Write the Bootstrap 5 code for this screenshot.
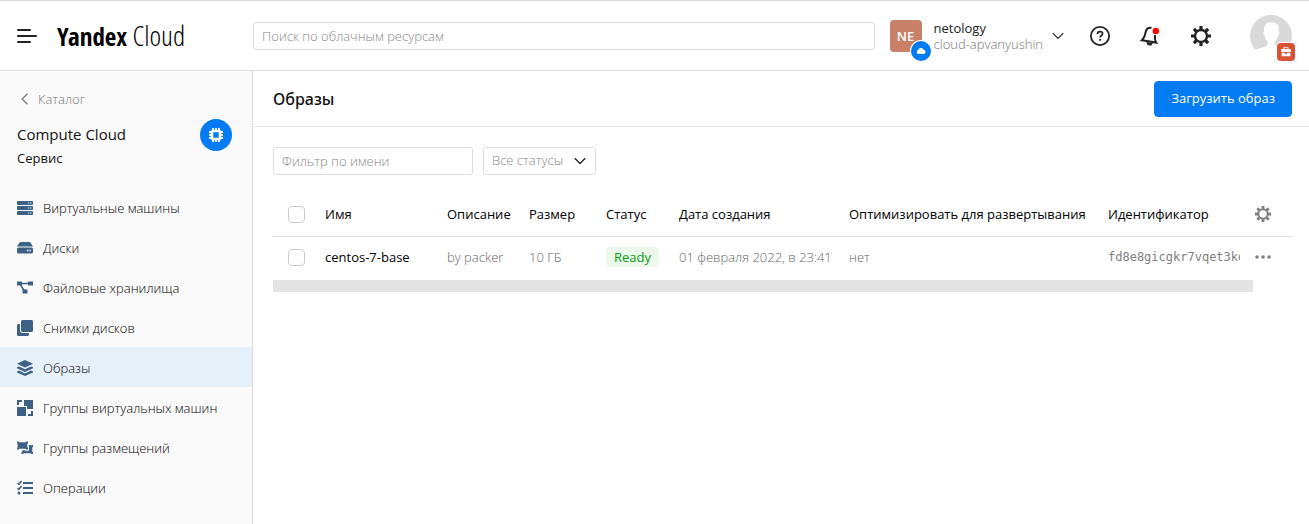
<!DOCTYPE html>
<html lang="ru">
<head>
<meta charset="utf-8">
<meta name="viewport" content="width=device-width, initial-scale=1">
<title>Образы — Compute Cloud</title>
<link rel="stylesheet" href="https://cdn.jsdelivr.net/npm/bootstrap@5.3.0/dist/css/bootstrap.min.css">
<style>
  body { font-family: "Open Sans", "Noto Sans", sans-serif; font-size: 13px; line-height: 16px; color: #111; }
  a { color: inherit; }
  svg { display: block; flex: none; }
  .muted { color: #777; font-weight: 300; }
  .topbar { border-top: 1px solid #d9d9d9; border-bottom: 1px solid #e0e0e0; height: 71px; padding-right: 17px; }
  .brand-area { width: 253px; padding-left: 17px; gap: 20px; }
  .logo { font: 300 28px/32px "Open Sans Condensed Light", "Open Sans Condensed", "Liberation Sans Narrow", sans-serif; color: #000; }
  .logo b { font-family: "Open Sans Condensed", "Liberation Sans Narrow", sans-serif; font-size: 25px; font-weight: 700; }
  .field { height: 28px; min-height: 28px; border: 1px solid #dedede; border-radius: 3px; padding: 0 8px; font-size: 13px; line-height: 16px; font-weight: 300; }
  .field::placeholder { color: #888; opacity: 1; }
  .filter-name { width: 200px; }
  .filter-status { width: 113px; color: #888; padding-bottom: 2px;
    background: #fff url("data:image/svg+xml,%3csvg xmlns='http://www.w3.org/2000/svg' viewBox='0 0 12 8'%3e%3cpath fill='none' stroke='%23222' stroke-width='1.4' d='M.8 1.2 6 6.4l5.2-5.2'/%3e%3c/svg%3e") no-repeat right 9px center / 12px 8px; }
  .icon-btn { border: 0; background: none; padding: 0; color: #222; }
  .account { margin-left: 15px; }
  .org { width: 32px; height: 32px; border-radius: 4px; background: #c98069; color: #fff; font-weight: 600; margin-right: 12px; }
  .org-mark { left: 20px; top: 20px; }
  .account-name { margin-right: 9px; }
  .actions { gap: 30px; margin-left: 26px; }
  .user { margin-left: 8px; }
  .user-mark { right: -4px; bottom: -5px; }
  .sidebar { width: 253px; background: #fafafa; border-right: 1px solid #dedede; }
  .side-head { padding: 20px 20px 0 17px; height: 116px; }
  .service-text { padding-top: 5px; }
  .service { font-size: 15px; line-height: 20px; margin-bottom: 6px; }
  .side-link { height: 40px; padding: 2px 0 0 17px; gap: 10px; text-decoration: none; font-weight: 300; color: #000; }
  .side-link svg { color: #3d6185; }
  .side-link.active { background: #e5f0f9; }
  .page-head { height: 56px; padding: 0 17px 0 20px; border-bottom: 1px solid #e5e5e5; }
  .page-head h1 { font-family: "Noto Sans", sans-serif; font-size: 16px; line-height: 20px; font-weight: 500; }
  .upload { --bs-btn-bg: #027bf3; --bs-btn-border-color: #027bf3; --bs-btn-padding-x: 16px; --bs-btn-border-radius: 4px; --bs-btn-font-size: 13px; height: 36px; }
  .page-body { padding: 20px 17px 0 20px; }
  .filters { gap: 10px; }
  .images { table-layout: fixed; margin: 18px 0 2px; width: 100%; min-width: 980px; }
  .images th { font-weight: 400; color: #000; height: 43px; }
  .images thead { border-bottom: 1px solid #dedede; }
  .images td { height: 42px; color: #666; font-weight: 300; }
  .images th, .images td { padding: 0; vertical-align: middle; white-space: nowrap; overflow: hidden; }
  .images .tick, .images .tools { padding-left: 15px; }
  .images .ident { font-family: "DejaVu Sans Mono", monospace; font-size: 12px; color: #808080; }
  .form-check-input { width: 17px; height: 17px; border: 1px solid #ccc; margin: 0; display: block; }
  .form-check-input[type=checkbox] { border-radius: 4px; }
  .c-tick { width: 52px } .c-name { width: 122px } .c-desc { width: 82px } .c-size { width: 77px }
  .c-status { width: 73px } .c-date { width: 170px } .c-opt { width: 259px } .c-tools { width: 52px }
  .ready { background: #ebf9ea; color: #0a9a13; font-weight: 400; border-radius: 4px; line-height: 20px; padding: 0 8px; }
  .scroll-track { height: 12px; background: #e4e4e4; margin-right: 39px; }
</style>
<script src="https://cdn.jsdelivr.net/npm/bootstrap@5.3.0/dist/js/bootstrap.bundle.min.js"></script>
</head>
<body class="d-flex flex-column min-vh-100">

<header class="topbar d-flex align-items-center">
  <div class="brand-area d-flex align-items-center flex-shrink-0">
    <button class="icon-btn" type="button" aria-label="Меню">
      <svg width="20" height="16" viewBox="0 0 20 16" fill="none" stroke="currentColor" stroke-width="2" stroke-linecap="round"><path d="M1 2h12M1 8h18M1 14h12"/></svg>
    </button>
    <a class="logo text-decoration-none text-nowrap" href="#"><b>Yandex</b> Cloud</a>
  </div>
  <input class="form-control field flex-grow-1 w-auto" type="search" placeholder="Поиск по облачным ресурсам" aria-label="Поиск по облачным ресурсам">
  <button class="icon-btn account d-flex align-items-center text-start flex-shrink-0" type="button">
    <span class="org position-relative d-flex align-items-center justify-content-center">NE
      <svg class="org-mark position-absolute" width="22" height="22" viewBox="0 0 22 22"><circle cx="11" cy="11" r="11" fill="#fff"/><circle cx="11" cy="11" r="10" fill="#027bf3"/><path fill="#fff" d="M8.500 14a2 2 0 0 1-.4-3.900 3 3 0 0 1 5.600-.4 2.200 2.200 0 0 1 .2 4.300z"/></svg>
    </span>
    <span class="account-name">netology<br><span class="muted">cloud-apvanyushin</span></span>
    <svg width="12" height="8" viewBox="0 0 12 8" fill="none" stroke="currentColor" stroke-width="1.200"><path d="M.8 1.200 6 6.400l5.200-5.200"/></svg>
  </button>
  <div class="actions d-flex align-items-center flex-shrink-0">
    <button class="icon-btn" type="button" aria-label="Справка">
      <svg width="20" height="20" viewBox="0 0 20 20" fill="none" stroke="currentColor" stroke-width="1.800"><circle cx="10" cy="10" r="9.100"/><path d="M7.400 8.100C7.400 6.500 8.500 5.600 10 5.600s2.600.9 2.600 2.200c0 1.700-2.500 1.800-2.500 3.700" stroke-width="1.700"/><circle cx="10.100" cy="13.800" r="1.100" fill="currentColor" stroke="none"/></svg>
    </button>
    <button class="icon-btn" type="button" aria-label="Уведомления">
      <svg width="20" height="20" viewBox="0 0 20 20"><path d="M11.500 1.800C8.300 1.500 6.200 3 5.700 6c-.5 3.400-1 5.500-3.700 8.200l14.200 2.400c-1.500-2.500-1.500-4.800-1.200-7.400" fill="none" stroke="currentColor" stroke-width="2"/><path fill="currentColor" d="m6.500 16 6.300 1c-.5 1.900-1.800 2.800-3.500 2.500-1.700-.2-2.800-1.600-2.800-3.500z"/><circle cx="15.800" cy="5" r="3.200" fill="red"/></svg>
    </button>
    <button class="icon-btn" type="button" aria-label="Настройки">
      <svg width="22" height="22" viewBox="-11 -11 22 22" fill="none" stroke="currentColor"><circle r="6" stroke-width="2.400"/><path stroke-width="3.200" d="M0-10v3.600M0 6.400V10M-10 0h3.600M6.400 0H10M-7.100-7.100l2.600 2.600M4.500 4.500l2.600 2.600M7.100-7.100 4.500-4.500M-4.500 4.500l-2.600 2.600"/></svg>
    </button>
    <button class="icon-btn user position-relative" type="button" aria-label="Профиль">
      <svg width="42" height="42" viewBox="0 0 42 42"><path fill="#d9d9d9" fill-rule="evenodd" d="M5 34.500A21 21 0 1 1 37 34.500C35 32.500 29 32 25 30v-3.500c1.800-1.500 2.700-3.500 3-6 1.500-.6 1.700-3.600.6-4.300C29.500 11 28 8.500 25 8.200 20 6 13 8 14 16.200c-1.200.7-.9 3.700.5 4.300.3 2.500 1.300 4.500 3 6V30C15 32.500 10 33 5 34.500z"/></svg>
      <svg class="user-mark position-absolute" width="20" height="20" viewBox="0 0 20 20"><rect width="20" height="20" rx="5" fill="#fff"/><rect x="1" y="1" width="18" height="18" rx="4" fill="#d95233"/><path fill="#fff" fill-rule="evenodd" d="M7.500 7V5.300h5V7h2.300v3H5.200V7zm1-1v1h3V6zM5.600 10.800h3.200v1h2.400v-1h3.200v3.400H5.600z"/></svg>
    </button>
  </div>
</header>

<div class="d-flex flex-grow-1">
  <aside class="sidebar flex-shrink-0">
    <div class="side-head">
      <a class="d-flex align-items-center text-decoration-none muted ms-1 mb-2" href="#">
        <svg class="me-2" width="9" height="12" viewBox="0 0 9 12" fill="none" stroke="#777" stroke-width="1.200"><path d="M6.500.8 1 6l5.500 5.200"/></svg>Каталог
      </a>
      <div class="d-flex align-items-start justify-content-between pt-1">
        <div class="service-text"><div class="service">Compute Cloud</div><div>Сервис</div></div>
        <svg width="32" height="32" viewBox="-16 -16 32 32"><circle r="16" fill="#027bf3"/><path stroke="#fff" stroke-width="1.800" d="M-3-7V7M0-7V7M3-7V7M-7-3H7M-7 0H7M-7 3H7"/><rect x="-4" y="-4" width="8" height="8" rx="1" fill="#027bf3" stroke="#fff" stroke-width="2.600"/></svg>
      </div>
    </div>
    <nav class="d-flex flex-column">
      <a class="side-link d-flex align-items-center" href="#"><svg width="16" height="16" viewBox="0 0 16 16"><path fill="currentColor" d="M1 1h14a1 1 0 0 1 1 1v2a1 1 0 0 1-1 1H1a1 1 0 0 1-1-1V2a1 1 0 0 1 1-1zm0 5h14a1 1 0 0 1 1 1v2a1 1 0 0 1-1 1H1a1 1 0 0 1-1-1V7a1 1 0 0 1 1-1zm0 5h14a1 1 0 0 1 1 1v2a1 1 0 0 1-1 1H1a1 1 0 0 1-1-1v-2a1 1 0 0 1 1-1z"/><path stroke="#fafafa" stroke-width="1.200" d="M11 3h1.200M13.300 3h1.200M11 8h1.200M13.300 8h1.200M11 13h1.200M13.300 13h1.200"/></svg>Виртуальные машины</a>
      <a class="side-link d-flex align-items-center" href="#"><svg width="16" height="16" viewBox="0 0 16 16"><path fill="currentColor" d="M4 2h8q1 0 1.600.8L16 6.500H0l2.400-3.700Q3 2 4 2zM1.500 7.500h13A1.500 1.500 0 0 1 16 9v3a1.500 1.500 0 0 1-1.500 1.500h-13A1.500 1.500 0 0 1 0 12V9a1.500 1.500 0 0 1 1.500-1.500z"/><path stroke="#fafafa" stroke-width="1.400" d="M10 10.500h1.400M12.500 10.500h1.400"/></svg>Диски</a>
      <a class="side-link d-flex align-items-center" href="#"><svg width="16" height="16" viewBox="0 0 16 16"><path fill="currentColor" d="M0 1.500h5v4H0zM11 1.500h5v4h-5zM5.500 9.500h5v4h-5z"/><path fill="none" stroke="currentColor" stroke-width="1.500" d="M4 3.500h8M3.500 5l4 6"/></svg>Файловые хранилища</a>
      <a class="side-link d-flex align-items-center" href="#"><svg width="16" height="16" viewBox="0 0 16 16"><path fill="currentColor" d="M5.500 0h9A1.500 1.500 0 0 1 16 1.500v9a1.500 1.500 0 0 1-1.500 1.500h-9A1.500 1.500 0 0 1 4 10.500v-9A1.500 1.500 0 0 1 5.500 0zM1.500 4H3v6.500A2.500 2.500 0 0 0 5.500 13H12v1.500a1.500 1.500 0 0 1-1.500 1.500h-9A1.500 1.500 0 0 1 0 14.500v-9A1.500 1.500 0 0 1 1.500 4z"/></svg>Снимки дисков</a>
      <a class="side-link active d-flex align-items-center" href="#" aria-current="page"><svg width="16" height="16" viewBox="0 0 16 16"><path fill="currentColor" d="m8 0 8 3.700-8 3.800-8-3.800zM0 7.300l2-.9L8 9.200l6-2.800 2 .9v1L8 12 0 8.300zM0 11.500l2-.9 6 2.800 6-2.800 2 .9v1L8 16l-8-3.500z"/></svg>Образы</a>
      <a class="side-link d-flex align-items-center" href="#"><svg width="16" height="16" viewBox="0 0 16 16"><path fill="currentColor" d="M7 0h9v9h-6V6H7zM0 7h9v9H0zM0 0h5v2H2v3H0zM16 11v5h-5v-2h3v-3z"/></svg>Группы виртуальных машин</a>
      <a class="side-link d-flex align-items-center" href="#"><svg width="16" height="16" viewBox="0 0 16 16"><path fill="currentColor" d="M0 1.500h2v.7h7v-.7h2v2h-.7v4h.7v2H9v-.7H2v.7H0v-2h.7v-4H0zM12 5h2v.7L15 5h1v2h-.7v5h.7v2h-2v-.7H6.500v.7h-2v-2h.7V10.200H8v.5h4z"/></svg>Группы размещений</a>
      <a class="side-link d-flex align-items-center" href="#"><svg width="16" height="16" viewBox="0 0 16 16"><path fill="none" stroke="currentColor" stroke-width="1.900" d="M6 3h10M6 8h10M6 13h10"/><path fill="none" stroke="currentColor" stroke-width="1.500" d="m.5 3 1.300 1.300L4.600 1M.5 8l1.300 1.300L4.600 6"/><circle cx="2" cy="13" r="1.500" fill="currentColor"/></svg>Операции</a>
    </nav>
  </aside>

  <main class="flex-grow-1 overflow-hidden">
    <div class="page-head d-flex align-items-center justify-content-between">
      <h1 class="m-0">Образы</h1>
      <button class="btn btn-primary upload" type="button">Загрузить образ</button>
    </div>
    <div class="page-body">
      <form class="filters d-flex">
        <input class="form-control field filter-name" type="text" placeholder="Фильтр по имени" aria-label="Фильтр по имени">
        <select class="form-select field filter-status" aria-label="Статус"><option>Все статусы</option></select>
      </form>
      <table class="images">
        <colgroup><col class="c-tick"><col class="c-name"><col class="c-desc"><col class="c-size"><col class="c-status"><col class="c-date"><col class="c-opt"><col><col class="c-tools"></colgroup>
        <thead>
          <tr>
            <th class="tick"><input class="form-check-input" type="checkbox" aria-label="Выбрать все"></th>
            <th>Имя</th><th>Описание</th><th>Размер</th><th>Статус</th><th>Дата создания</th><th>Оптимизировать для развертывания</th><th>Идентификатор</th>
            <th class="tools"><button class="icon-btn d-block" type="button" aria-label="Настроить столбцы"><svg width="16" height="16" viewBox="-8 -8 16 16" fill="none" stroke="#808080"><circle r="4.700" stroke-width="2"/><path stroke-width="2.800" d="M0-8v3M0 5v3M-8 0h3M5 0h3M-5.700-5.700l2 2M3.700 3.700l2 2M5.700-5.700l-2 2M-3.700 3.700l-2 2"/></svg></button></th>
          </tr>
        </thead>
        <tbody>
          <tr>
            <td class="tick"><input class="form-check-input" type="checkbox" aria-label="Выбрать centos-7-base"></td>
            <td><a class="text-decoration-none text-black fw-normal" href="#">centos-7-base</a></td><td>by packer</td><td>10 ГБ</td><td><span class="ready d-inline-block">Ready</span></td><td>01 февраля 2022, в 23:41</td><td>нет</td><td class="ident">fd8e8gicgkr7vqet3kd1</td>
            <td class="tools"><button class="icon-btn d-block" type="button" aria-label="Действия"><svg width="16" height="4" viewBox="0 0 16 4" fill="#808080"><circle cx="2" cy="2" r="1.800"/><circle cx="8" cy="2" r="1.800"/><circle cx="14" cy="2" r="1.800"/></svg></button></td>
          </tr>
        </tbody>
      </table>
      <div class="scroll-track"></div>
    </div>
  </main>
</div>
</body>
</html>
